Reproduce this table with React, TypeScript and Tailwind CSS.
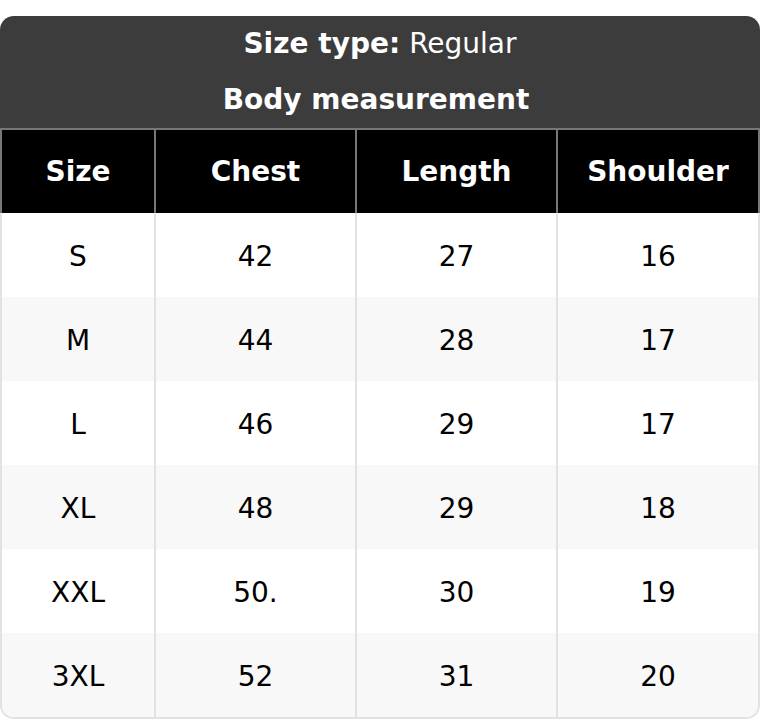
const columns = ['Size', 'Chest', 'Length', 'Shoulder'];

const rows = [
  ['S', '42', '27', '16'],
  ['M', '44', '28', '17'],
  ['L', '46', '29', '17'],
  ['XL', '48', '29', '18'],
  ['XXL', '50.', '30', '19'],
  ['3XL', '52', '31', '20'],
];

export default function App() {
  return (
    <div className="bg-white w-[760px] h-[720px] pt-[16px] font-['DejaVu_Sans',sans-serif]">
      <div className="rounded-t-[14px] bg-[#3c3c3c] text-white text-[28px] text-center">
        <div className="h-[56px] flex items-center justify-center">
          <span className="font-bold">Size type:</span>
          <span className="ml-[9px]">Regular</span>
        </div>
        <div className="h-[56px] flex items-center justify-center font-bold pr-[8px]">Body measurement</div>
      </div>
      <div className="border-t-2 border-[#777777] bg-black text-white grid grid-cols-[156px_201px_201px_1fr] text-[28px] font-bold">
        {columns.map((c, i) => (
          <div
            key={c}
            className={`h-[83px] flex items-center justify-center border-r-2 border-[#777777] ${i === 0 ? 'border-l-2' : ''}`}
          >
            {c}
          </div>
        ))}
      </div>
      <div className="border-x-2 border-b-2 border-[#e2e2e2] rounded-b-[14px] overflow-hidden">
        {rows.map((r, ri) => (
          <div
            key={r[0]}
            className={`grid grid-cols-[154px_201px_201px_1fr] text-[28px] text-black ${ri % 2 === 1 ? 'bg-[#f8f8f8]' : 'bg-white'}`}
          >
            {r.map((v, ci) => (
              <div
                key={ci}
                className={`h-[84px] flex items-center justify-center pt-[3px] ${ci < 3 ? 'border-r-2 border-[#e2e2e2]' : ''}`}
              >
                {v}
              </div>
            ))}
          </div>
        ))}
      </div>
    </div>
  );
}
